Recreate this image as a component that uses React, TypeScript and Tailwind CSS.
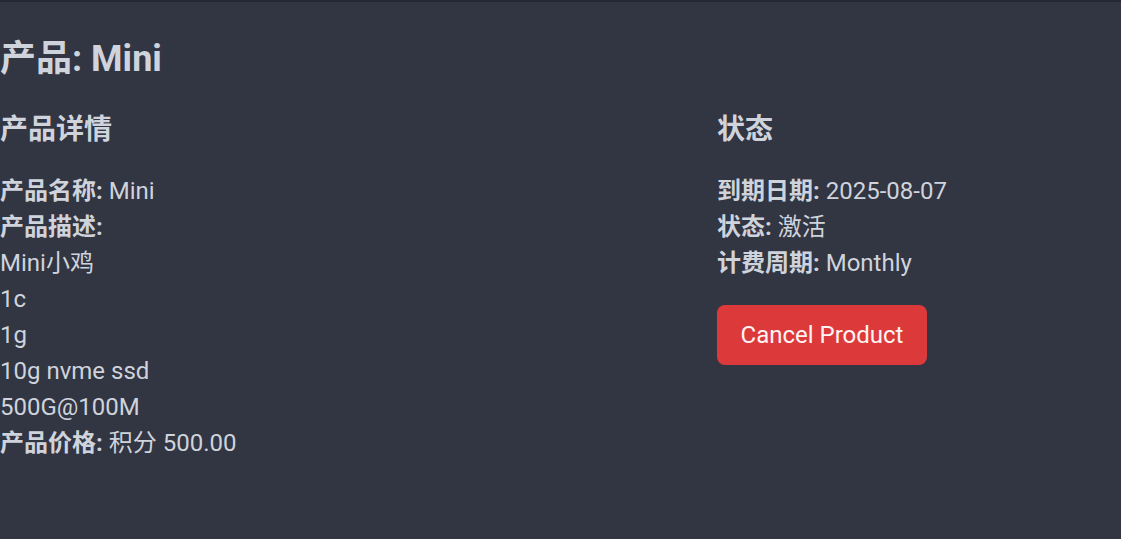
const font = { fontFamily: 'Roboto, "Noto Sans CJK SC", sans-serif' };

const Row = ({ label, value }: { label: string; value?: string }) => (
  <div>
    <span className="font-bold">{label}:</span>
    {value ? <span> {value}</span> : null}
  </div>
);

export default function App() {
  return (
    <div
      className="min-h-[539px] w-full bg-[#323542] border-t-2 border-[#252733] text-[#cfd3dc]"
      style={font}
    >
      <h2 className="mt-[36px] text-[36px] font-bold leading-[1.2]">产品: Mini</h2>

      <div className="mt-[32px] grid grid-cols-[717px_1fr]">
        <div>
          <h4 className="text-[28px] font-bold leading-[1.2]">产品详情</h4>
          <div className="mt-[26px] text-[24px] leading-[36px]">
            <Row label="产品名称" value="Mini" />
            <Row label="产品描述" />
            <div>Mini小鸡</div>
            <div>1c</div>
            <div>1g</div>
            <div>10g nvme ssd</div>
            <div>500G@100M</div>
            <Row label="产品价格" value="积分 500.00" />
          </div>
        </div>

        <div>
          <h4 className="text-[28px] font-bold leading-[1.2]">状态</h4>
          <div className="mt-[26px] text-[24px] leading-[36px]">
            <Row label="到期日期" value="2025-08-07" />
            <Row label="状态" value="激活" />
            <Row label="计费周期" value="Monthly" />
          </div>
          <button className="mt-[24px] h-[60px] w-[210px] rounded-[8px] bg-[#dc3a3a] text-[24px] text-[#fff4f4]">
            Cancel Product
          </button>
        </div>
      </div>
    </div>
  );
}
